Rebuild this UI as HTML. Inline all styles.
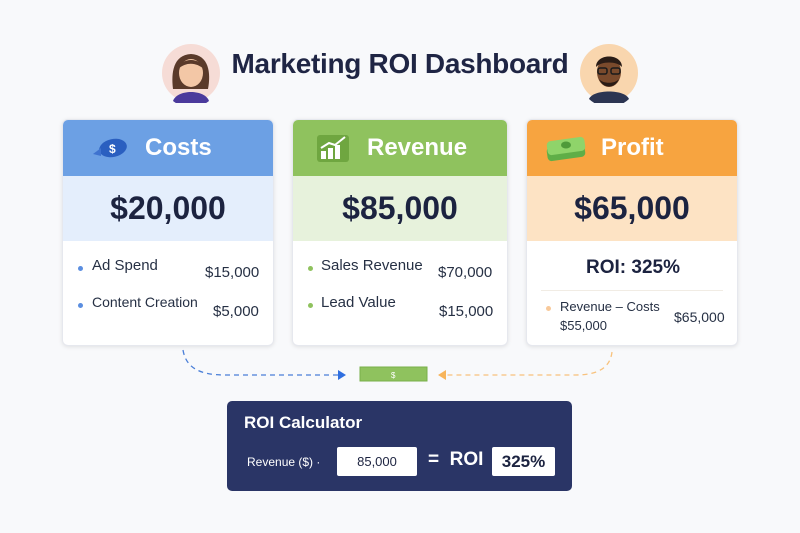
<!DOCTYPE html>
<html><head><style>
*{margin:0;padding:0;box-sizing:border-box}
body{width:800px;height:533px;background:#f8f9fb;font-family:"Liberation Sans",sans-serif;color:#1c2340;position:relative;overflow:hidden}
.abs{position:absolute}
.title{left:0;width:800px;top:48px;text-align:center;font-size:28px;font-weight:bold;color:#1f2544;letter-spacing:-0.3px}
.card{position:absolute;top:119px;height:227px;border-radius:6px;background:#fff;box-shadow:0 1px 4px rgba(0,0,0,.1);overflow:hidden;border:1px solid #e6e8ee}
.hd{height:56px;color:#fff;font-weight:bold;font-size:24px;display:flex;align-items:center}
.big{height:65px;display:flex;align-items:center;justify-content:center;font-size:32px;font-weight:bold;color:#1c2340}
.row{position:absolute;font-size:15px;color:#263044}
.dot{position:absolute;width:5px;height:5px;border-radius:50%}
</style></head><body>
<div class="abs title">Marketing ROI Dashboard</div>
<svg class="abs" style="left:161px;top:43px" width="60" height="60" viewBox="0 0 60 60">
<circle cx="30" cy="30" r="29" fill="#f6dcd6"/>
<path d="M12 46 C10 30 12 12 30 11 C48 12 50 30 47 46 Z" fill="#5a3a2a"/>
<ellipse cx="30" cy="30" rx="12" ry="14" fill="#f3c7a6"/>
<path d="M17 26 C20 14 40 14 43 26 C36 20 26 18 17 26Z" fill="#5a3a2a"/>
<path d="M12 58 C16 46 44 46 48 58 A29 29 0 0 1 12 58Z" fill="#4b3a9c"/>
</svg>
<svg class="abs" style="left:579px;top:43px" width="60" height="60" viewBox="0 0 60 60">
<circle cx="30" cy="30" r="29" fill="#f9d6ae"/>
<ellipse cx="30" cy="29" rx="12" ry="15" fill="#7a4a2c"/>
<path d="M17 24 C17 10 43 10 43 24 C38 18 22 18 17 24Z" fill="#2a1c16"/>
<rect x="19" y="25" width="9" height="6" rx="2" fill="none" stroke="#1b1b1b" stroke-width="1.5"/>
<rect x="32" y="25" width="9" height="6" rx="2" fill="none" stroke="#1b1b1b" stroke-width="1.5"/>
<path d="M20 36 C24 46 36 46 40 36 C36 41 24 41 20 36Z" fill="#2a1c16"/>
<path d="M10 56 C14 46 46 46 50 56 A29 29 0 0 1 10 56Z" fill="#2c3552"/>
</svg>

<div class="card" style="left:62px;width:212px">
 <div class="hd" style="background:#6ca0e4"><svg style="margin-left:26px;margin-right:16px" width="40" height="26" viewBox="0 0 40 26"><ellipse cx="24" cy="13" rx="14" ry="9" fill="#2a5fc0" transform="rotate(-12 24 13)"/><path d="M4 19 L12 13 L12 21Z" fill="#3f73cf"/><text x="20" y="18" font-size="12" font-weight="bold" fill="#fff" font-family="Liberation Sans">$</text></svg>Costs</div>
 <div class="big" style="background:#e4eefc">$20,000</div>
 <div class="dot" style="background:#5b8ee0;left:15px;top:146px"></div>
 <div class="row" style="left:29px;top:137px">Ad Spend</div>
 <div class="row" style="left:142px;top:144px">$15,000</div>
 <div class="dot" style="background:#5b8ee0;left:15px;top:183px"></div>
 <div class="row" style="left:29px;top:174px;font-size:14px">Content Creation</div>
 <div class="row" style="left:150px;top:183px">$5,000</div>
</div>
<div class="card" style="left:292px;width:216px">
 <div class="hd" style="background:#8fc25e"><svg style="margin-left:22px;margin-right:16px" width="36" height="30" viewBox="0 0 36 30"><rect x="2" y="2" width="32" height="27" rx="3" fill="#6fa640"/><rect x="6" y="18" width="5" height="8" fill="#fff"/><rect x="13" y="15" width="5" height="11" fill="#fff"/><rect x="20" y="12" width="5" height="14" fill="#fff"/><path d="M6 15 L14 10 L20 12 L30 4" stroke="#fff" stroke-width="2" fill="none"/></svg>Revenue</div>
 <div class="big" style="background:#e7f2dc">$85,000</div>
 <div class="dot" style="background:#8fc25e;left:15px;top:146px"></div>
 <div class="row" style="left:28px;top:137px">Sales Revenue</div>
 <div class="row" style="left:145px;top:144px">$70,000</div>
 <div class="dot" style="background:#8fc25e;left:15px;top:183px"></div>
 <div class="row" style="left:28px;top:174px">Lead Value</div>
 <div class="row" style="left:146px;top:183px">$15,000</div>
</div>
<div class="card" style="left:526px;width:212px">
 <div class="hd" style="background:#f7a440"><svg style="margin-left:16px;margin-right:12px" width="46" height="30" viewBox="0 0 46 30"><rect x="4" y="12" width="38" height="14" rx="4" fill="#5fae47" transform="rotate(-8 23 19)"/><rect x="4" y="6" width="38" height="14" rx="4" fill="#8fd46a" transform="rotate(-8 23 13)"/><ellipse cx="23" cy="12" rx="5" ry="3.5" fill="#4f9a3a"/></svg>Profit</div>
 <div class="big" style="background:#fde3c4">$65,000</div>
 <div class="row" style="left:0;width:212px;text-align:center;top:137px;font-size:19px;font-weight:bold;color:#1c2340">ROI: 325%</div>
 <div style="position:absolute;left:14px;right:14px;top:170px;border-top:1px solid #f1ece4"></div>
 <div class="dot" style="background:#f8c99a;left:19px;top:186px"></div>
 <div class="row" style="left:33px;top:179px;font-size:13px">Revenue – Costs</div>
 <div class="row" style="left:33px;top:198px;font-size:13px">$55,000</div>
 <div class="row" style="left:147px;top:189px;font-size:14px">$65,000</div>
</div>

<svg class="abs" style="left:0;top:340px" width="800" height="50">
<path d="M183 10 C186 28 200 35 225 35 L338 35" stroke="#4a7fd8" stroke-width="1.3" stroke-dasharray="5 4" fill="none"/>
<path d="M338 30 L346 35 L338 40Z" fill="#2f6fe0"/>
<path d="M612 12 C610 28 598 35 575 35 L446 35" stroke="#f8c27d" stroke-width="1.3" stroke-dasharray="5 4" fill="none"/>
<path d="M446 30 L438 35 L446 40Z" fill="#f7b45a"/>
<rect x="360" y="27" width="67" height="14" fill="#8fc25e" stroke="#79b04a"/>
<text x="391" y="38" font-size="8" fill="#fff" font-family="Liberation Sans">$</text>
</svg>

<div class="abs" style="left:227px;top:401px;width:345px;height:90px;background:#2a3566;border-radius:5px">
 <div class="abs" style="left:17px;top:12px;color:#fff;font-weight:bold;font-size:17px">ROI Calculator</div>
 <div class="abs" style="left:20px;top:54px;color:#fff;font-size:12px">Revenue ($) ·</div>
 <div class="abs" style="left:110px;top:46px;width:80px;height:29px;background:#fff;border-radius:2px;text-align:center;line-height:29px;font-size:13px;color:#1c2340">85,000</div>
 <div class="abs" style="left:201px;top:48px;color:#fff;font-size:19px;font-weight:bold">= &nbsp;ROI</div>
 <div class="abs" style="left:265px;top:46px;width:63px;height:29px;background:#fff;border-radius:2px;text-align:center;line-height:29px;font-size:17px;font-weight:bold;color:#1c2340">325%</div>
</div>
</body></html>
